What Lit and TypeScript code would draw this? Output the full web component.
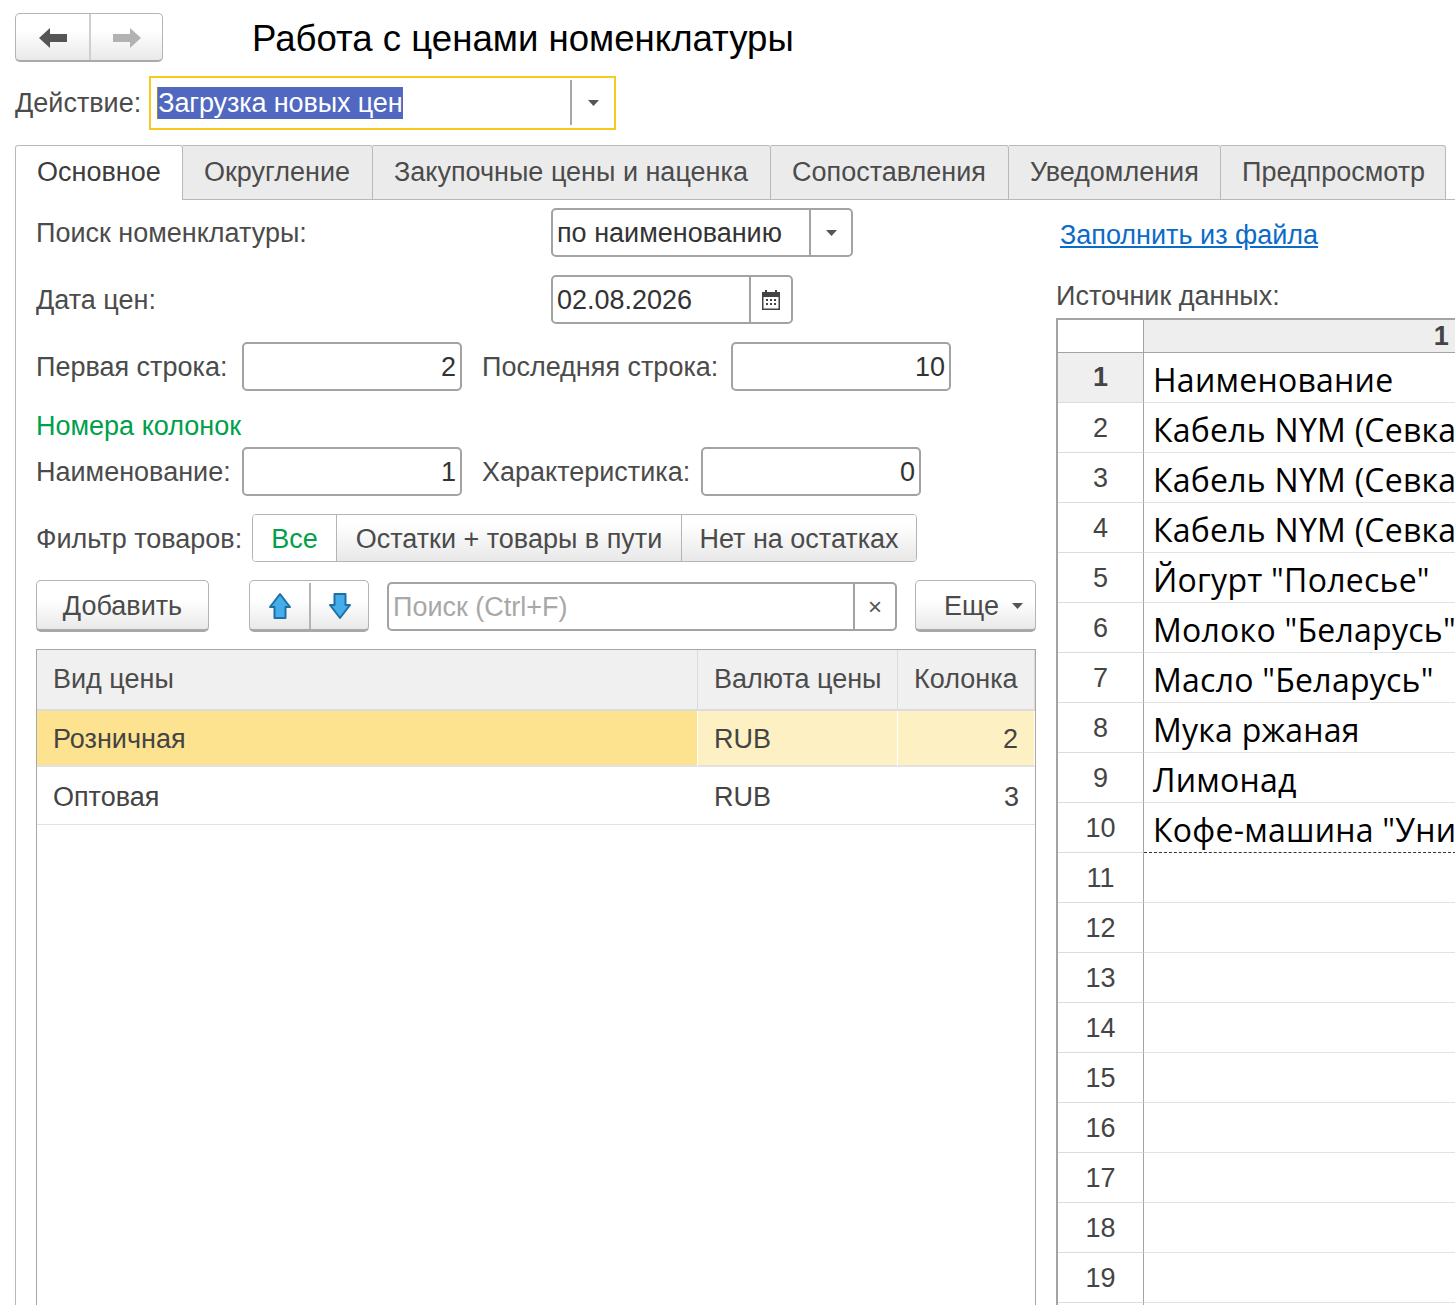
import { LitElement, html, css, svg } from "lit";
import { customElement } from "lit/decorators.js";

const TABS = [
  { label: "Основное", width: 168 },
  { label: "Округление", width: 190 },
  { label: "Закупочные цены и наценка", width: 398 },
  { label: "Сопоставления", width: 238 },
  { label: "Уведомления", width: 212 },
  { label: "Предпросмотр", width: 225 },
];

const SOURCE = [
  "Наименование",
  "Кабель NYM (Севкабель)",
  "Кабель NYM (Севкабель)",
  "Кабель NYM (Севкабель)",
  'Йогурт "Полесье"',
  'Молоко "Беларусь"',
  'Масло "Беларусь"',
  "Мука ржаная",
  "Лимонад",
  'Кофе-машина "Универсал"',
];

const caret = html`<svg class="caret" width="11" height="6" viewBox="0 0 11 6"><path d="M0 0h11L5.500 6z" fill="#555"></path></svg>`;

const blueArrow = (d: string) => svg`<svg width="24" height="28" viewBox="0 0 24 28"><path d=${d} fill="#45aeea" stroke="#1f6ea6" stroke-width="2" stroke-linejoin="round"></path></svg>`;

@customElement("app-root")
export class AppRoot extends LitElement {
  static styles = css`
    :host {
      display: block;
      width: 1455px;
      height: 1305px;
      overflow: hidden;
      background: #fff;
      color: #4b4b4b;
      font-family: "Liberation Sans", Arial, sans-serif;
      font-size: 27px;
    }
    .top {
      display: flex;
      align-items: center;
      padding: 13px 0 0 15px;
    }
    .nav {
      display: flex;
      width: 148px;
      height: 49px;
      box-sizing: border-box;
      border: 1px solid #b4b4b4;
      border-bottom: 2px solid #aaa;
      border-radius: 5px;
      background: linear-gradient(#fff 35%, #e9e9e9);
    }
    .nav div {
      flex: 1;
      display: flex;
      align-items: center;
      justify-content: center;
      padding-top: 1px;
    }
    .nav div:first-child {
      flex: none;
      width: 73px;
    }
    .nav div + div {
      border-left: 2px solid #cfcfcf;
    }
    .title {
      margin-left: 89px;
      padding-top: 2px;
      font-size: 36.6px;
      color: #000;
      white-space: nowrap;
    }
    .action {
      display: flex;
      align-items: center;
      margin: 14px 0 0 15px;
      height: 53px;
    }
    .action > span {
      padding-top: 2px;
    }
    .action-field {
      display: flex;
      align-items: center;
      margin-left: 8px;
      width: 467px;
      height: 54px;
      box-sizing: border-box;
      border: 2px solid #fbc91e;
      padding-left: 6px;
    }
    .selected {
      width: 414px;
      line-height: 32px;
      color: #fff;
      white-space: nowrap;
      letter-spacing: -0.12px;
    }
    .selected span {
      display: inline-block;
      background: #5068c0;
      border-left: 1px solid #a08a30;
    }
    .action-btn {
      width: 42px;
      height: 45px;
      display: flex;
      align-items: center;
      justify-content: center;
      border-left: 2px solid #a8a8a8;
    }
    .tabs {
      display: flex;
      margin: 16px 0 0 15px;
      height: 55px;
      border-bottom: 1px solid #b8b8b8;
      box-sizing: border-box;
    }
    .tab {
      box-sizing: border-box;
      height: 55px;
      padding-left: 21px;
      line-height: 52px;
      white-space: nowrap;
      background: #ebebeb;
      border: 1px solid #b8b8b8;
      border-left: 0;
      border-radius: 0 3px 0 0;
    }
    .tab.active {
      background: #fff;
      color: #3c3c3c;
      border-left: 1px solid #b8b8b8;
      border-bottom: 0;
      border-radius: 3px 3px 0 0;
    }
    .panel {
      display: flex;
      margin-left: 15px;
      height: 1105px;
      border-left: 1px solid #b8b8b8;
    }
    .left {
      width: 1000px;
      margin-left: 20px;
      padding-top: 8px;
      display: flex;
      flex-direction: column;
    }
    .row {
      display: flex;
      align-items: center;
      height: 49px;
      margin-bottom: 18px;
      white-space: nowrap;
    }
    .row > span {
      padding-top: 2px;
    }
    .w-515 {
      width: 515px;
    }
    .w-206 {
      width: 206px;
    }
    .ml {
      margin-left: 20px;
    }
    .field {
      display: flex;
      align-items: center;
      box-sizing: border-box;
      height: 49px;
      border: 2px solid #a3a3a3;
      border-radius: 5px;
      background: #fff;
      color: #333;
    }
    .field .value {
      flex: 1;
      padding: 2px 4px 0;
      white-space: nowrap;
      overflow: hidden;
    }
    .num {
      width: 220px;
    }
    .num .value {
      text-align: right;
    }
    .side {
      align-self: stretch;
      width: 40px;
      display: flex;
      align-items: center;
      justify-content: center;
      border-left: 2px solid #a3a3a3;
    }
    .green {
      height: 32px;
      line-height: 34px;
      margin-bottom: 6px;
      color: #00a04a;
    }
    .row.filter {
      height: 48px;
    }
    .toggle {
      display: flex;
      height: 48px;
      box-sizing: border-box;
      border: 1px solid #b4b4b4;
      border-radius: 4px;
      overflow: hidden;
      margin-left: 11px;
    }
    .toggle div {
      box-sizing: border-box;
      display: flex;
      align-items: center;
      justify-content: center;
      padding-top: 2px;
      background: linear-gradient(#fff 20%, #e8e8e8);
      border-left: 1px solid #b4b4b4;
    }
    .toggle div.on {
      background: #fff;
      border-left: 0;
      color: #00a04a;
    }
    .toolbar {
      height: 52px;
      margin-bottom: 17px;
      align-items: flex-start;
    }
    .btn {
      box-sizing: border-box;
      height: 52px;
      display: flex;
      align-items: center;
      justify-content: center;
      padding-top: 2px;
      border: 1px solid #b4b4b4;
      border-bottom: 3px solid #a8a8a8;
      border-radius: 5px;
      background: linear-gradient(#fff 40%, #e9e9e9);
    }
    .add {
      width: 173px;
    }
    .arrows {
      width: 120px;
      margin-left: 40px;
    }
    .arrows div {
      flex: 1;
      align-self: stretch;
      display: flex;
      align-items: center;
      justify-content: center;
    }
    .arrows div:first-child {
      flex: none;
      width: 59px;
    }
    .arrows div + div {
      border-left: 2px solid #b4b4b4;
    }
    .search {
      width: 510px;
      margin: 2px 0 0 18px;
      height: 49px;
      color: #a8a8a8;
    }
    .search .side {
      color: #555;
      font-size: 24px;
    }
    .more {
      width: 121px;
      margin-left: 18px;
      gap: 13px;
      padding-left: 16px;
    }
    .table {
      flex: 1;
      width: 1000px;
      box-sizing: border-box;
      border: 1px solid #a8a8a8;
      border-bottom: 0;
    }
    .tr {
      display: grid;
      grid-template-columns: 661px 200px 137px;
    }
    .tr > div {
      box-sizing: border-box;
      padding: 0 16px;
      white-space: nowrap;
    }
    .head > div {
      height: 61px;
      line-height: 59px;
      background: #f0f0f0;
      border-right: 1px solid #dcdcdc;
      border-bottom: 2px solid #dcdcdc;
    }
    .body > div {
      height: 58px;
      line-height: 60px;
      color: #444;
      border-bottom: 1px solid #e2e2e2;
    }
    .body > div.right {
      text-align: right;
    }
    .tr.current > div {
      height: 56px;
      line-height: 57px;
      background: #fdf1c4;
      border-right: 1px solid #fff;
      border-bottom: 2px solid #e2e2e2;
    }
    .tr.current > div:first-child {
      background: #fde28f;
    }
    .right-col {
      margin-left: 20px;
      padding-top: 20px;
    }
    a {
      display: block;
      height: 30px;
      line-height: 30px;
      margin-left: 4px;
      color: #0b6bc8;
      white-space: nowrap;
    }
    .source-label {
      margin-top: 31px;
      height: 30px;
      line-height: 30px;
      white-space: nowrap;
    }
    .grid {
      margin-top: 7px;
      width: 398px;
      border-left: 2px solid #a3a3a3;
      border-top: 2px solid #a3a3a3;
    }
    .g-row {
      display: flex;
      height: 50px;
      box-sizing: border-box;
    }
    .g-row.g-head {
      height: 33px;
      border-bottom: 1px solid #a3a3a3;
    }
    .g-num {
      flex: none;
      box-sizing: border-box;
      width: 86px;
      text-align: center;
      line-height: 51px;
      color: #444;
      border-right: 1px solid #a3a3a3;
      border-bottom: 1px solid #dcdcdc;
    }
    .g-num.on {
      background: #efefef;
      font-weight: bold;
      line-height: 49px;
    }
    .g-cell {
      flex: 1;
      box-sizing: border-box;
      padding: 2px 0 0 9px;
      font-family: "Open Sans", sans-serif;
      font-size: 32px;
      letter-spacing: 0.25px;
      line-height: 50px;
      color: #000;
      white-space: nowrap;
      overflow: hidden;
      border-bottom: 1px solid #e2e2e2;
    }
    .g-cell.last {
      border-bottom: 1px dashed #333;
    }
    .g-head .g-num {
      line-height: 32px;
      border-bottom: 0;
    }
    .g-head .g-cell {
      padding: 0 7px 0 0;
      font-family: "Liberation Sans", sans-serif;
      font-size: 27px;
      font-weight: bold;
      line-height: 33px;
      color: #444;
      text-align: right;
      background: #eeeeee;
      border-bottom: 0;
    }
  `;

  render() {
    return html`
      <div class="top">
        <div class="nav">
          <div>
            <svg width="28" height="20" viewBox="0 0 28 20"><path d="M0 10 11 0v6h17v8H11v6z" fill="#555"></path></svg>
          </div>
          <div>
            <svg width="28" height="20" viewBox="0 0 28 20"><path d="M28 10 17 0v6H0v8h17v6z" fill="#b2b2b2"></path></svg>
          </div>
        </div>
        <div class="title">Работа с ценами номенклатуры</div>
      </div>

      <div class="action">
        <span>Действие:</span>
        <div class="action-field">
          <div class="selected"><span>Загрузка новых цен</span></div>
          <div class="action-btn">${caret}</div>
        </div>
      </div>

      <div class="tabs">
        ${TABS.map(
          (t, i) =>
            html`<div class="tab ${i === 0 ? "active" : ""}" style="width:${t.width}px">${t.label}</div>`
        )}
      </div>

      <div class="panel">
        <div class="left">
          <div class="row">
            <span class="w-515">Поиск номенклатуры:</span>
            <div class="field" style="width:302px">
              <div class="value">по наименованию</div>
              <div class="side">${caret}</div>
            </div>
          </div>
          <div class="row">
            <span class="w-515">Дата цен:</span>
            <div class="field" style="width:242px">
              <div class="value">02.08.2026</div>
              <div class="side">
                <svg width="18" height="20" viewBox="0 0 18 20">
                  <path d="M3 0h2v2h8V0h2v2h3v18H0V2h3z" fill="#444"></path>
                  <path d="M1.500 7h15v11.500h-15z" fill="#fff"></path>
                  <path
                    d="M4 9h2v2H4zM8 9h2v2H8zM12 9h2v2h-2zM4 13h2v2H4zM8 13h2v2H8zM12 13h2v2h-2z"
                    fill="#444"
                  ></path>
                </svg>
              </div>
            </div>
          </div>
          <div class="row">
            <span class="w-206">Первая строка:</span>
            <div class="field num"><div class="value">2</div></div>
            <span class="ml" style="width:249px">Последняя строка:</span>
            <div class="field num"><div class="value">10</div></div>
          </div>
          <div class="green">Номера колонок</div>
          <div class="row">
            <span class="w-206">Наименование:</span>
            <div class="field num"><div class="value">1</div></div>
            <span class="ml" style="width:219px">Характеристика:</span>
            <div class="field num"><div class="value">0</div></div>
          </div>
          <div class="row filter">
            <span style="width:205px">Фильтр товаров:</span>
            <div class="toggle">
              <div class="on" style="width:83px">Все</div>
              <div style="width:345px">Остатки + товары в пути</div>
              <div style="width:235px">Нет на остатках</div>
            </div>
          </div>
          <div class="row toolbar">
            <div class="btn add">Добавить</div>
            <div class="btn arrows">
              <div>${blueArrow("M12 2 22 15H17.500V26H6.500V15H2Z")}</div>
              <div>${blueArrow("M12 26 22 13H17.500V2H6.500V13H2Z")}</div>
            </div>
            <div class="field search">
              <div class="value">Поиск (Ctrl+F)</div>
              <div class="side">×</div>
            </div>
            <div class="btn more">Еще ${caret}</div>
          </div>
          <div class="table">
            <div class="tr head">
              <div>Вид цены</div>
              <div>Валюта цены</div>
              <div>Колонка</div>
            </div>
            <div class="tr body current">
              <div>Розничная</div>
              <div>RUB</div>
              <div class="right">2</div>
            </div>
            <div class="tr body">
              <div>Оптовая</div>
              <div>RUB</div>
              <div class="right">3</div>
            </div>
          </div>
        </div>

        <div class="right-col">
          <a href="#">Заполнить из файла</a>
          <div class="source-label">Источник данных:</div>
          <div class="grid">
            <div class="g-row g-head">
              <div class="g-num"></div>
              <div class="g-cell">1</div>
            </div>
            ${Array.from({ length: 20 }, (_, i) => html`
              <div class="g-row">
                <div class="g-num ${i === 0 ? "on" : ""}">${i + 1}</div>
                <div class="g-cell ${i === 9 ? "last" : ""}">${SOURCE[i] ?? ""}</div>
              </div>
            `)}
          </div>
        </div>
      </div>
    `;
  }
}

declare global {
  interface HTMLElementTagNameMap {
    "app-root": AppRoot;
  }
}
